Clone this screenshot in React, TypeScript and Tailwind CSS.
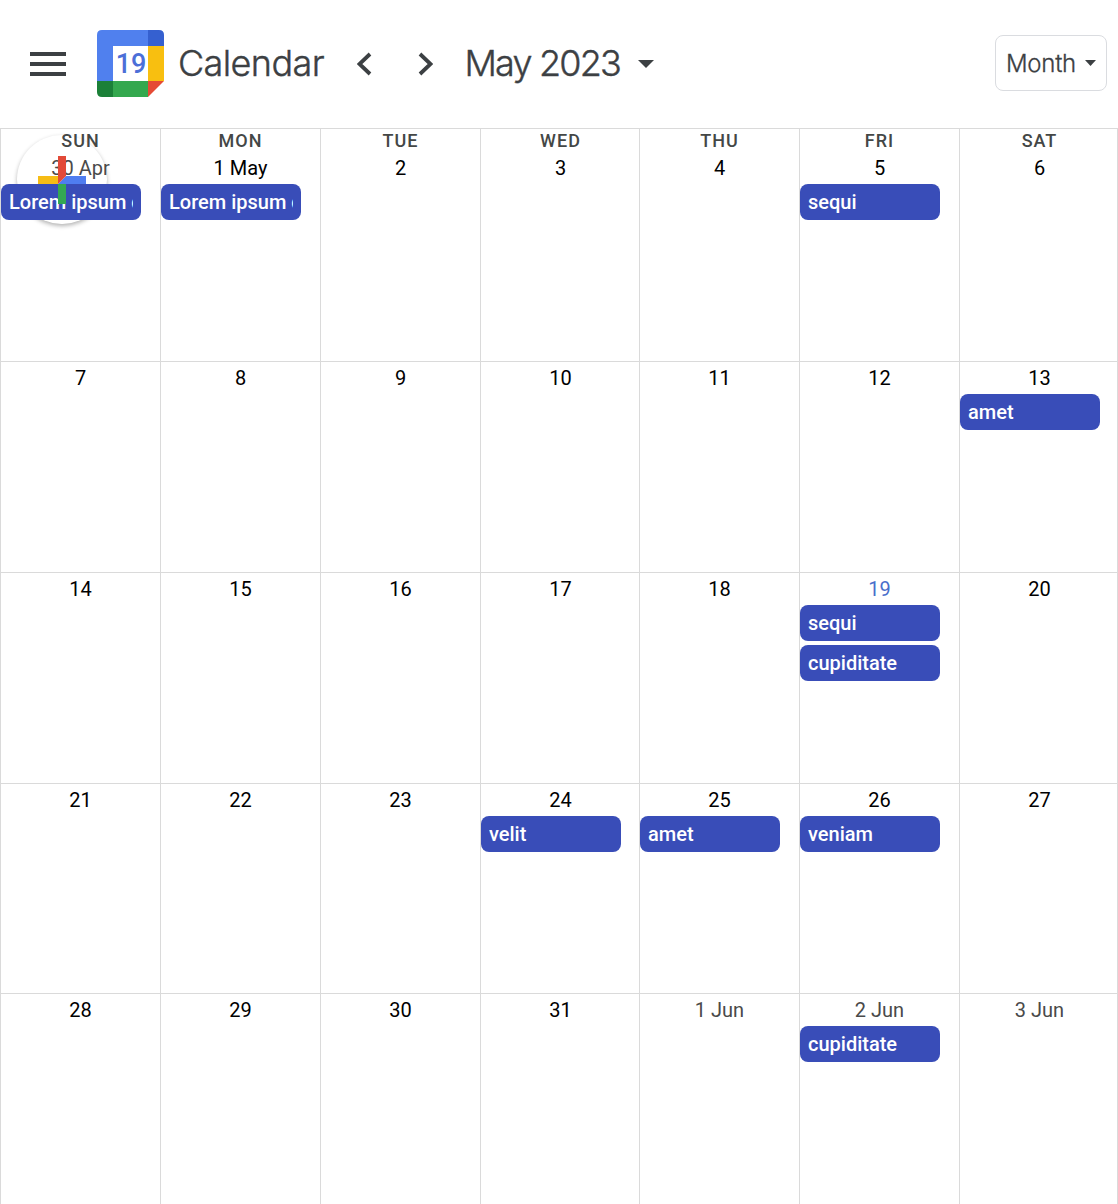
type Day = { label: string; events?: string[]; tone?: "muted" | "today" };

const weekdays = ["SUN", "MON", "TUE", "WED", "THU", "FRI", "SAT"];

const weeks: Day[][] = [
  [
    { label: "30 Apr", tone: "muted", events: ["Lorem ipsum dolor"] },
    { label: "1 May", events: ["Lorem ipsum dolor"] },
    { label: "2" }, { label: "3" }, { label: "4" },
    { label: "5", events: ["sequi"] },
    { label: "6" },
  ],
  [
    { label: "7" }, { label: "8" }, { label: "9" }, { label: "10" }, { label: "11" }, { label: "12" },
    { label: "13", events: ["amet"] },
  ],
  [
    { label: "14" }, { label: "15" }, { label: "16" }, { label: "17" }, { label: "18" },
    { label: "19", tone: "today", events: ["sequi", "cupiditate"] },
    { label: "20" },
  ],
  [
    { label: "21" }, { label: "22" }, { label: "23" },
    { label: "24", events: ["velit"] },
    { label: "25", events: ["amet"] },
    { label: "26", events: ["veniam"] },
    { label: "27" },
  ],
  [
    { label: "28" }, { label: "29" }, { label: "30" }, { label: "31" },
    { label: "1 Jun", tone: "muted" },
    { label: "2 Jun", tone: "muted", events: ["cupiditate"] },
    { label: "3 Jun", tone: "muted" },
  ],
];

function Logo() {
  return (
    <svg className="mb-0.5 ml-[30.5px] h-[67px] w-[67px] shrink-0" viewBox="0 0 67 67">
      <path d="M5 0H51V16H16V51H0V5Q0 0 5 0Z" fill="#5080ee" />
      <path d="M51 0H62Q67 0 67 5V16H51Z" fill="#3560d0" />
      <path d="M51 16H67V51H51Z" fill="#f8bf10" />
      <path d="M16 51H51V67H16Z" fill="#34a84e" />
      <path d="M0 51H16V67H5Q0 67 0 62Z" fill="#1b8038" />
      <path d="M51 51H67L51 67Z" fill="#e54a35" />
      <path d="M16 16H51V51H16Z" fill="#fff" />
      <text x="34" y="42.5" textAnchor="middle" className="font-['Roboto',sans-serif] text-[27px] font-medium" fill="#4c6fd8">19</text>
    </svg>
  );
}

function Header() {
  return (
    <header className="flex h-32 items-center pr-[11px] pl-[30px] font-['Inter',sans-serif] text-[#3c4043]">
      <button className="flex w-9 shrink-0 flex-col gap-1.5" aria-label="Menu">
        <span className="h-1 bg-[#3c4043]" />
        <span className="h-1 bg-[#3c4043]" />
        <span className="h-1 bg-[#3c4043]" />
      </button>
      <Logo />
      <h1 className="mb-0.5 ml-[14.5px] w-[179px] text-[36px] leading-none font-light whitespace-nowrap tracking-[-0.6px] [-webkit-text-stroke:0.4px_#3c4043]">Calendar</h1>
      <svg className="h-6 w-4 shrink-0" viewBox="0 0 16 24" fill="none" stroke="#3c4043" strokeWidth="3.8">
        <path d="M13 2L2.5 12L13 22" />
      </svg>
      <svg className="ml-[44px] h-6 w-4 shrink-0" viewBox="0 0 16 24" fill="none" stroke="#3c4043" strokeWidth="3.8">
        <path d="M3 2L13.5 12L3 22" />
      </svg>
      <h2 className="mb-0.5 ml-[31.5px] w-[173.5px] text-[36px] leading-none font-light whitespace-nowrap tracking-[-1.8px] [-webkit-text-stroke:0.4px_#3c4043]">May 2023</h2>
      <svg className="mb-px h-2 w-4 shrink-0" viewBox="0 0 16 8"><path d="M0 0H16L8 8Z" fill="#3c4043" /></svg>
      <button className="mb-0.5 ml-auto flex h-14 w-28 items-center justify-between rounded-lg border border-[#dadce0] pr-[10px] pl-[10px]">
        <span className="mt-0.5 text-[24px] leading-none font-light whitespace-nowrap tracking-[-0.25px] [-webkit-text-stroke:0.3px_#3c4043]">Month</span>
        <svg className="h-1.5 w-[11px]" viewBox="0 0 11 6"><path d="M0 0H11L5.5 6Z" fill="#3c4043" /></svg>
      </button>
    </header>
  );
}

function DayCell({ day, weekday }: { day: Day; weekday?: string }) {
  const color = day.tone === "muted" ? "text-[#4a4a4a]" : day.tone === "today" ? "text-[#4a6fcb]" : "text-black";
  return (
    <div className="min-w-0 border-t border-l border-[#dadada]">
      <div className="relative z-10">
        {weekday && (
          <div className="h-[23px] w-[159px] text-center text-[18px] leading-6 font-medium tracking-[1px] text-[#444746]">{weekday}</div>
        )}
        <div className={`h-8 w-[159px] pt-1 text-center text-[20px] leading-6 ${color}`}>{day.label}</div>
        <div className="flex flex-col gap-1">
          {day.events?.map((event) => (
            <div key={event} className="h-9 w-[139.5px] rounded-lg bg-[#394db8] px-2 text-[20px] leading-9 font-medium text-white">
              <div className="overflow-hidden whitespace-nowrap">{event}</div>
            </div>
          ))}
        </div>
      </div>
    </div>
  );
}

export default function App() {
  return (
    <div className="relative h-[1204px] w-[1118px] overflow-hidden bg-white font-['Roboto',sans-serif]">
      <Header />
      <main className="grid h-[1076px] w-[1118px] grid-cols-[160px_160px_160px_159px_160px_160px_158px] grid-rows-[233px_211px_211px_210px_211px] border-r border-[#dadada]">
        {weeks.map((week, w) =>
          week.map((day, d) => <DayCell key={day.label} day={day} weekday={w === 0 ? weekdays[d] : undefined} />),
        )}
      </main>
      <div className="absolute top-[135px] left-[17px] h-[89px] w-[90px] rounded-full bg-white shadow-[0_2px_4px_rgba(0,0,0,0.3)]" />
      <svg className="absolute top-[156px] left-[38px] z-20 h-12 w-12" viewBox="0 0 48 48">
        <path d="M0 20H20V28H0Z" fill="#f6bc15" />
        <path d="M20 28L28 20H48V28Z" fill="#4f7df0" />
        <path d="M20 0H28V20L20 28Z" fill="#e24a38" />
        <path d="M20 28H28V48H20Z" fill="#34a853" />
      </svg>
    </div>
  );
}
